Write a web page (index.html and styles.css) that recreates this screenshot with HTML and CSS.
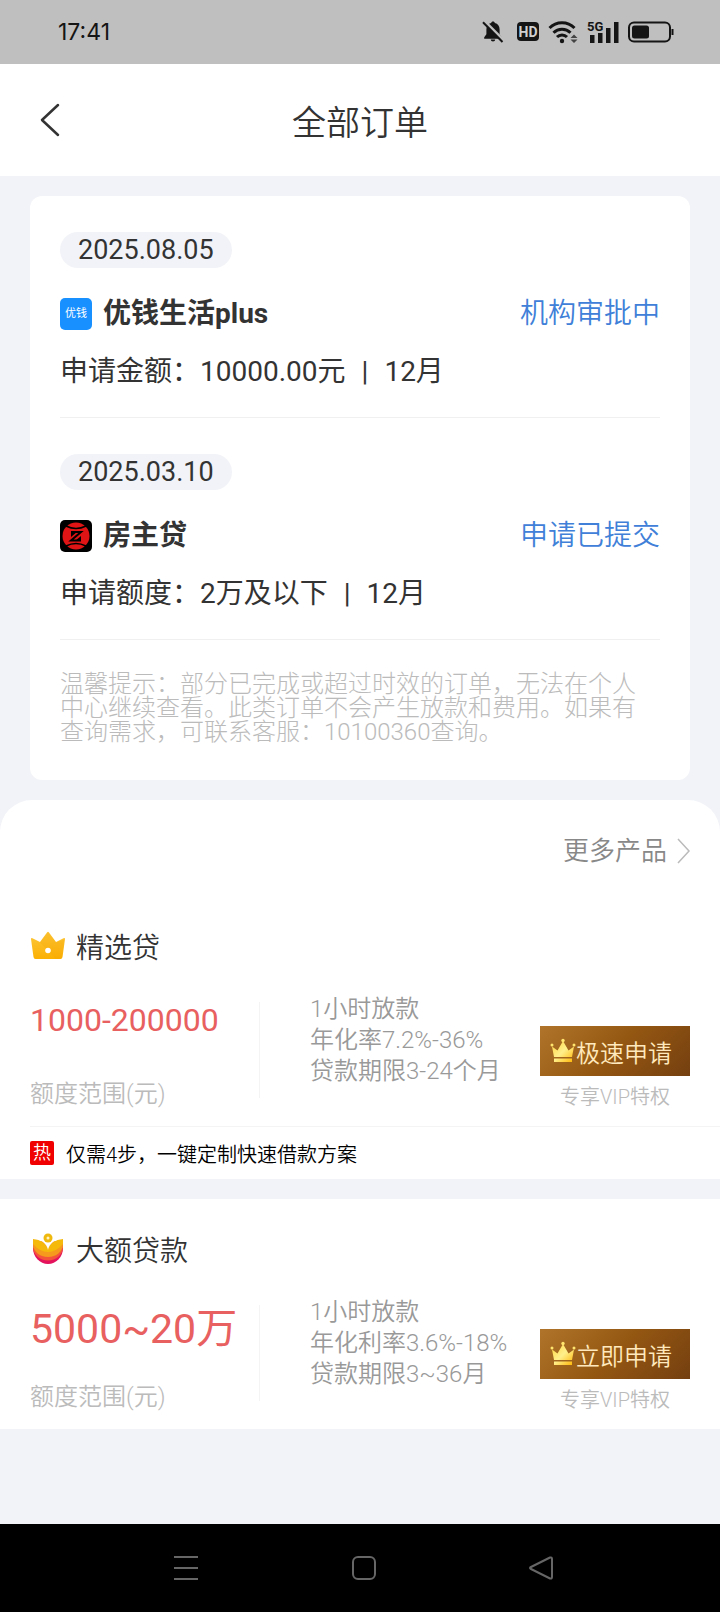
FILE: index.html
```html
<!DOCTYPE html>
<html lang="zh-CN">
<head>
<meta charset="utf-8">
<meta name="viewport" content="width=device-width, initial-scale=1">
<title>全部订单</title>
<link rel="stylesheet" href="styles.css">
</head>
<body>
<svg class="defs" width="0" height="0" aria-hidden="true">
  <defs>
    <linearGradient id="gold" x1="0" y1="0" x2="1" y2="1">
      <stop offset="0" stop-color="#ffd23c"/><stop offset=".5" stop-color="#fff08c"/><stop offset="1" stop-color="#ffb400"/>
    </linearGradient>
    <linearGradient id="amber" x1="0" y1="0" x2="0" y2="1">
      <stop offset="0" stop-color="#fdc93f"/><stop offset="1" stop-color="#fbb003"/>
    </linearGradient>
    <symbol id="crown" viewBox="0 0 26 26">
      <path fill="url(#gold)" d="M4 19 2 8.500l5.500 4L13 3l5.500 9.500 5.500-4L22 19zM4 20.500h18V24H4z"/>
      <circle cx="2" cy="7" r="1.500" fill="#ffe56e"/><circle cx="13" cy="2.500" r="1.700" fill="#ffe56e"/><circle cx="24" cy="7" r="1.500" fill="#ffe56e"/>
    </symbol>
  </defs>
</svg>

<div class="status">
  <time class="status-time">17:41</time>
  <div class="status-icons">
    <svg width="24" height="24" viewBox="0 0 24 24"><path fill="#151515" d="M11 1.500c1 0 1.700.600 1.900 1.500 2.900.800 4.700 3 4.700 6.200v5l2.200 3v1.500H2.200v-1.500l2.200-3v-5C4.400 6 6.200 3.800 9.100 3c.2-.9.900-1.500 1.900-1.500zM8.800 19.500h4.400a2.200 2 0 0 1-4.400 0z"/><path d="M2.500 1 22.500 21" stroke="#bfbfbf" stroke-width="2.500"/><path d="M1 2.200 20.500 22" stroke="#151515" stroke-width="2"/></svg>
    <svg width="24" height="20" viewBox="0 0 24 20"><rect x="2" width="22" height="19" rx="4" fill="#151515"/><text class="hd" x="13" y="14.500" text-anchor="middle">HD</text></svg>
    <svg width="30" height="24" viewBox="0 0 30 24"><g fill="none" stroke="#151515" stroke-width="3"><path d="M1.500 8a17.500 17.500 0 0 1 25 0M5.500 12.800a12 12 0 0 1 17 0M9 17a7 7 0 0 1 10 0"/></g><circle cx="14" cy="21" r="2.200" fill="#151515"/><path fill="#444" d="m26 14.500 3.500 3.500h-7zM26 23l3.500-3.500h-7z"/></svg>
    <svg width="32" height="24" viewBox="0 0 32 24"><path fill="#151515" d="M3 15h4.500v8H3zM11 13h4.500v10H11zM19 8h4.500v15H19zM27 2h4.500v21H27z"/><text class="net" x="0" y="11">5G</text></svg>
    <svg width="46" height="22" viewBox="0 0 46 22"><rect x="1" y="1.500" width="41" height="19" rx="5" fill="none" stroke="#151515" stroke-width="2"/><rect x="4" y="4.500" width="17" height="13" rx="2.500" fill="#151515"/><path d="M44.500 8v6" stroke="#151515" stroke-width="2"/></svg>
  </div>
</div>

<header class="header">
  <button class="back" type="button" aria-label="返回"><svg width="20" height="34" viewBox="0 0 20 34"><path d="M18 2 2 17l16 15" fill="none" stroke="#333" stroke-width="2.500" stroke-linecap="round" stroke-linejoin="round"/></svg></button>
  <h1 class="header-title">全部订单</h1>
</header>

<main class="main">
  <section class="orders">
    <article class="order">
      <time class="order-date">2025.08.05</time>
      <div class="order-row">
        <span class="logo logo-blue">优钱</span>
        <h2 class="order-name">优钱生活plus</h2>
        <span class="order-state">机构审批中</span>
      </div>
      <p class="order-detail"><span>申请金额：10000.00元</span><span>|</span><span>12月</span></p>
    </article>
    <article class="order">
      <time class="order-date">2025.03.10</time>
      <div class="order-row">
        <svg class="logo" viewBox="0 0 32 32"><rect width="32" height="32" rx="5"/><circle cx="16" cy="16" r="13.500" fill="#e01414"/><path d="M6 6q10 5 20 0M6 26q10-5 20 0" fill="none" stroke="#000" stroke-width="1.500"/><path d="M11 12h10L11 20.500h10" fill="none" stroke="#000" stroke-width="2"/><path d="M11 11h7l-7 6zM21 21h-6l6-5z"/></svg>
        <h2 class="order-name">房主贷</h2>
        <span class="order-state">申请已提交</span>
      </div>
      <p class="order-detail"><span>申请额度：2万及以下</span><span>|</span><span>12月</span></p>
    </article>
    <p class="notice">温馨提示：部分已完成或超过时效的订单，无法在个人中心继续查看。此类订单不会产生放款和费用。如果有查询需求，可联系客服：10100360查询。</p>
  </section>

  <section class="panel panel-first">
    <div class="more-row">
      <a class="more" href="#more">更多产品<svg width="14" height="26" viewBox="0 0 14 26"><path d="M1 1l11 12L1 25" fill="none" stroke="#bbb" stroke-width="1.500"/></svg></a>
    </div>
    <article class="product">
      <div class="product-head">
        <svg width="36" height="32" viewBox="0 0 36 32"><path fill="url(#amber)" d="M1 9q0-1.500 1.500-.800l7.500 3.800L17 2.500q1-1.500 2 0L26 12l7.500-3.800Q35 7.500 35 9l-2.500 18q-.3 2-2 2h-25q-1.700 0-2-2z"/><path d="M18 2 10 12.500 26 29h4l2-2 2.500-17.500L26 12.500z" fill="#f5a300" opacity=".25"/><circle cx="18" cy="20.500" r="2.800" fill="#fff"/></svg>
        <h2 class="product-title">精选贷</h2>
      </div>
      <div class="product-body">
        <div class="quota">
          <strong class="amount">1000-200000</strong>
          <span class="quota-label">额度范围(元)</span>
        </div>
        <ul class="terms">
          <li>1小时放款</li><li>年化率7.2%-36%</li><li>贷款期限3-24个月</li>
        </ul>
        <div class="action">
          <button class="apply" type="button"><svg width="26" height="26"><use href="#crown"/></svg>极速申请</button>
          <span class="vip">专享VIP特权</span>
        </div>
      </div>
      <p class="hot"><span class="hot-tag">热</span>仅需4步，一键定制快速借款方案</p>
    </article>
  </section>

  <section class="panel">
    <article class="product">
      <div class="product-head">
        <svg width="36" height="32" viewBox="0 0 36 32"><path fill="#e4125c" d="M3 15h30a15 16 0 0 1-30 0z"/><path fill="#f4553a" d="M3 11h30v3a15 13.500 0 0 1-30 0z"/><path fill="#f59a1d" d="M3 8h30v3a15 13 0 0 1-30 0z"/><path fill="#f5b90c" d="M3 6q9 0 15 9Q24 6 33 6v5q-7 8-15 8T3 11z"/><path fill="#fff" d="M3 0h30v6q-6 0-10 3-4 3-5 8-1-5-5-8Q9 6 3 6z"/><circle cx="18" cy="5" r="4.500" fill="#f0b90e"/><circle cx="18" cy="5" r="1.500" fill="#fff3c0"/></svg>
        <h2 class="product-title">大额贷款</h2>
      </div>
      <div class="product-body">
        <div class="quota">
          <strong class="amount amount-large">5000~20万</strong>
          <span class="quota-label">额度范围(元)</span>
        </div>
        <ul class="terms">
          <li>1小时放款</li><li>年化利率3.6%-18%</li><li>贷款期限3~36月</li>
        </ul>
        <div class="action">
          <button class="apply" type="button"><svg width="26" height="26"><use href="#crown"/></svg>立即申请</button>
          <span class="vip">专享VIP特权</span>
        </div>
      </div>
    </article>
  </section>
</main>

<nav class="navbar">
  <button type="button" aria-label="最近任务"><svg width="26" height="26" viewBox="0 0 26 26"><path d="M1 2h24M1 13h24M1 24h24"/></svg></button>
  <button type="button" aria-label="主页"><svg width="26" height="26" viewBox="0 0 26 26"><rect x="2" y="2" width="22" height="22" rx="5"/></svg></button>
  <button type="button" aria-label="返回"><svg width="26" height="26" viewBox="0 0 26 26"><path d="M22 2.500 3 12q-2 1 0 2l19 9.500q2 .500 2-1.500V4q0-2-2-1.500z"/></svg></button>
</nav>
</body>
</html>
```
FILE: styles.css
```css
* {
  box-sizing: border-box;
}

body {
  margin: 0;
  min-height: 100vh;
  display: flex;
  flex-direction: column;
  background: #f2f3f8;
  color: #333;
  font-family: Roboto, "Noto Sans CJK SC", sans-serif;
  font-size: 24px;
  font-weight: 350;
}

h1, h2, p, ul {
  margin: 0;
  padding: 0;
}

h1, h2, strong {
  font-weight: inherit;
}

button {
  border: 0;
  padding: 0;
  background: none;
  font: inherit;
  color: inherit;
}

svg {
  display: block;
  flex: none;
}

.defs {
  position: absolute;
}

.status {
  display: flex;
  align-items: center;
  justify-content: space-between;
  height: 64px;
  padding: 0 46px 0 58px;
  background: #bfbfbf;
  color: #151515;
}

.status-time {
  font-family: Inter, sans-serif;
  font-size: 23px;
  font-weight: 400;
}

.status-icons {
  display: flex;
  align-items: center;
  gap: 9px;
}

.hd {
  fill: #d0d0d0;
  font: 700 14px Roboto, sans-serif;
}

.net {
  fill: #151515;
  stroke: #bfbfbf;
  stroke-width: 2px;
  paint-order: stroke;
  font: 700 13px Roboto, sans-serif;
}

.header {
  display: grid;
  grid-template-columns: 60px 1fr 60px;
  align-items: center;
  height: 112px;
  padding: 0 30px;
  background: #fff;
}

.back {
  padding: 10px;
  justify-self: start;
}

.header-title {
  font-size: 34px;
  text-align: center;
}

.main {
  flex: 1;
  display: flex;
  flex-direction: column;
  gap: 20px;
  padding-top: 20px;
}

.orders {
  margin: 0 30px;
  padding: 0 30px 36px;
  border-radius: 12px;
  background: #fff;
}

.order {
  padding: 36px 0 27px;
  border-bottom: 1px solid #f0f0f0;
}

.order-date {
  display: block;
  width: fit-content;
  padding: 0 18px;
  border-radius: 18px;
  background: #f2f3f8;
  font-size: 27px;
  font-weight: 400;
  line-height: 36px;
}

.order-row {
  display: flex;
  align-items: center;
  gap: 11px;
  margin-top: 28px;
  font-size: 28px;
  line-height: 36px;
}

.logo {
  width: 32px;
  height: 32px;
}

.logo-blue {
  border-radius: 5px;
  background: #1890ff;
  color: #fff;
  font-size: 11px;
  font-weight: 400;
  line-height: 32px;
  text-align: center;
}

.order-name {
  flex: 1;
  font-size: 28px;
  font-weight: 700;
}

.order-state {
  color: #4080d8;
}

.order-detail {
  display: flex;
  gap: 16px;
  margin-top: 22px;
  font-size: 28px;
  font-weight: 400;
  line-height: 36px;
}

.notice {
  margin-top: 32px;
  padding-right: 10px;
  color: #bbb;
  font-weight: 300;
  line-height: 24px;
}

.panel {
  background: #fff;
}

.panel-first {
  border-radius: 32px 32px 0 0;
}

.more-row {
  display: flex;
  justify-content: flex-end;
  padding: 32px 29px 26px;
}

.more {
  display: flex;
  align-items: center;
  gap: 10px;
  color: #888;
  font-size: 26px;
  line-height: 38px;
  text-decoration: none;
}

.product {
  padding-top: 30px;
}

.product-head {
  display: flex;
  align-items: center;
  gap: 10px;
  height: 40px;
  padding: 0 30px;
}

.product-title {
  font-size: 28px;
}

.product-body {
  display: grid;
  grid-template-columns: 230px 1fr 150px;
  margin-top: 28px;
  padding: 0 30px 18px;
}

.quota {
  display: flex;
  flex-direction: column;
  justify-content: space-between;
  background: linear-gradient(#f4f4f4, #f4f4f4) right 8px / 1px 96px no-repeat;
}

.amount {
  color: #e8605f;
  font-size: 32px;
  font-weight: 400;
  line-height: 52px;
}

.amount-large {
  font-size: 41px;
  line-height: 64px;
}

.quota-label {
  color: #bbb;
  line-height: 28px;
}

.terms {
  padding-left: 50px;
  color: #999;
  line-height: 31px;
  list-style: none;
  white-space: nowrap;
}

.action {
  padding-top: 32px;
  text-align: center;
}

.apply {
  display: flex;
  align-items: center;
  width: 100%;
  height: 50px;
  padding-left: 10px;
  background: linear-gradient(135deg, #b0752a, #945712 50%, #743f10);
  color: #ffe9bd;
}

.vip {
  display: block;
  margin-top: 10px;
  color: #bbb;
  font-size: 20px;
  line-height: 22px;
}

.hot {
  display: flex;
  align-items: center;
  gap: 12px;
  height: 53px;
  margin-left: 30px;
  border-top: 1px solid #f4f4f4;
  color: #000;
  font-size: 20px;
}

.hot-tag {
  width: 24px;
  border-radius: 2px;
  background: #f00000;
  color: #fff;
  font-size: 18px;
  line-height: 24px;
  text-align: center;
}

.navbar {
  display: flex;
  align-items: center;
  justify-content: space-between;
  height: 88px;
  padding: 0 23% 0 24%;
  background: #000;
}

.navbar svg {
  fill: none;
  stroke: #666;
  stroke-width: 2px;
}
```
